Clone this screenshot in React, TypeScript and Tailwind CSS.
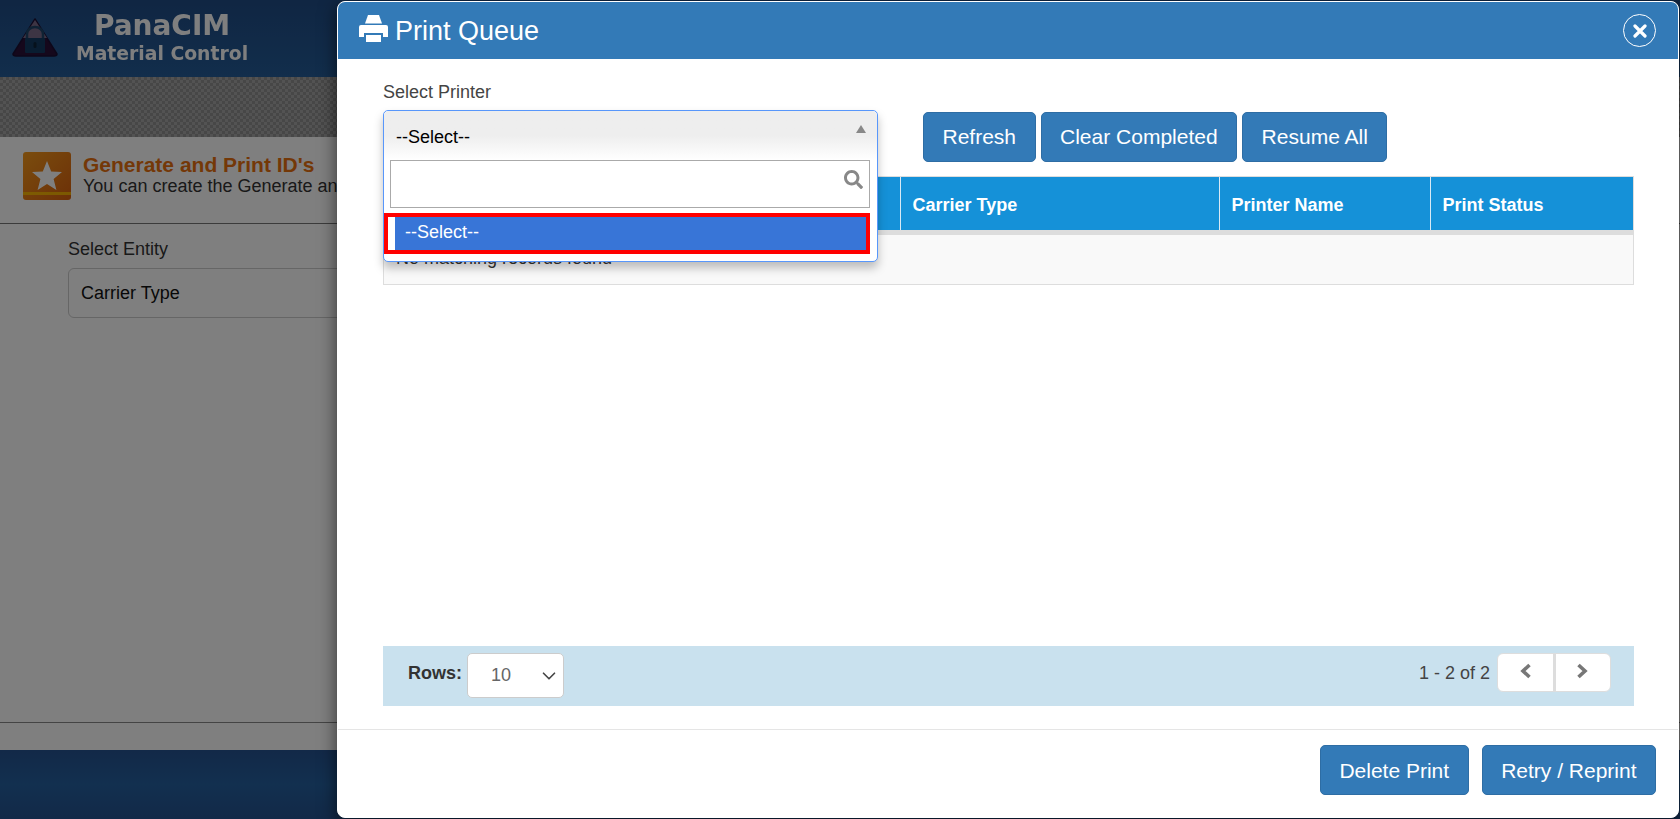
import { FaSearch } from 'react-icons/fa';
import { ChevronDown } from 'lucide-react';

const tableColumns = [
  { label: 'Carrier Type', width: 'w-[319px]' },
  { label: 'Printer Name', width: 'w-[211px]' },
  { label: 'Print Status', width: 'flex-1' },
];

const toolbarButtons = ['Refresh', 'Clear Completed', 'Resume All'];
const footerButtons = ['Delete Print', 'Retry / Reprint'];

const BlueButton = ({ label, className }: { label: string; className: string }) => (
  <button className={`bg-[#337ab7] border border-[#2e6da4] rounded-[5px] text-white text-[21px] ${className}`}>
    {label}
  </button>
);

const Logo = () => (
  <svg width="46" height="40" viewBox="0 0 46 40" className="shrink-0">
    <path d="M23 2 L45 37 Q45 39 42 39 L4 39 Q1 39 1 37 Z" fill="#2b1038" stroke="#1b0f33" strokeWidth="1.5" strokeLinejoin="round" />
    <path d="M23 3 L35 21 L11 21 Z" fill="#7a6a88" />
    <path d="M15 22 V17 a8 7 0 0 1 16 0 V22" fill="none" stroke="#1e4468" strokeWidth="2.5" />
    <rect x="13" y="21" width="20" height="15" rx="1" fill="#123a62" />
    <rect x="21.5" y="25" width="3" height="6" rx="1.5" fill="#0c2238" />
  </svg>
);

const StarBadge = () => (
  <div className="relative w-[48px] h-[48px] shrink-0 rounded-[3px] overflow-hidden bg-gradient-to-br from-[#f59a1c] to-[#d9600f]">
    <div className="absolute left-0 right-0 bottom-[5px] h-[3px] bg-[#ffc400]/80" />
    <svg width="48" height="48" viewBox="0 0 48 48" className="relative">
      <path d="M24 9 L28.2 19.4 L39 20 L30.6 27 L33.4 38 L24 32 L14.6 38 L17.4 27 L9 20 L19.8 19.4 Z" fill="#ffffff" />
    </svg>
  </div>
);

const PrintIcon = () => (
  <svg width="29" height="27" viewBox="0 0 29 27" fill="#fff" className="-mt-[4px] shrink-0">
    <path d="M9 0 H20 L23 8.5 H6 Z" />
    <path d="M2 10 H27 Q29 10 29 12 V22 H24 V18 H5 V22 H0 V12 Q0 10 2 10 Z" />
    <rect x="7" y="20" width="15" height="7" />
  </svg>
);

const Chevron = ({ d }: { d: string }) => (
  <svg width="13" height="16" viewBox="0 0 13 16" className="-mt-[3px]">
    <path d={d} fill="none" stroke="#777" strokeWidth="3.6" />
  </svg>
);

const App = () => {
  return (
    <div className="relative h-screen overflow-hidden font-['Liberation_Sans',Arial,sans-serif] text-[18px] text-[#333]">
      {/* page behind the modal */}
      <div className="flex flex-col h-full bg-white">
        <header className="h-[77px] flex items-start pl-[12px] pt-[17px] gap-[18px] bg-gradient-to-b from-[#204c86] to-[#245c98]">
          <Logo />
          <div className="flex flex-col items-center -mt-[7px] font-['DejaVu_Sans',sans-serif] font-bold text-white blur-[0.6px]">
            <span className="text-[28px] leading-[32px]">PanaCIM</span>
            <span className="text-[18.8px] leading-[24px]">Material Control</span>
          </div>
        </header>
        <div className="h-[60px] bg-[#9a9a9a] bg-[repeating-conic-gradient(#a6a6a6_0%_25%,#8e8e8e_0%_50%)] bg-[length:6px_6px]" />
        <main className="flex-1 flex flex-col">
          <div className="h-[87px] flex items-start pl-[23px] pt-[15px] gap-[12px] border-b border-[#777]">
            <StarBadge />
            <div className="pt-[1px]">
              <h2 className="font-bold text-[21px] leading-[23px] text-[#e8700f] whitespace-nowrap">Generate and Print ID's</h2>
              <p className="leading-[21px] text-[#333] whitespace-nowrap">You can create the Generate and Print ID's</p>
            </div>
          </div>
          <div className="flex-1 pl-[68px] pt-[15px] border-b border-[#888]">
            <label className="block leading-[21px] mb-[8px]">Select Entity</label>
            <div className="w-[600px] h-[50px] flex items-center pl-[12px] border border-[#ccc] rounded-[6px] text-[#111]">Carrier Type</div>
          </div>
          <div className="h-[27px]" />
        </main>
        <footer className="h-[69px] bg-gradient-to-b from-[#245290] via-[#24609f] to-[#245290]" />
      </div>
      <div className="absolute inset-0 bg-black/50" />

      {/* print queue modal */}
      <div className="absolute left-[337px] right-px top-px bottom-px flex flex-col bg-white border border-white rounded-[8px] shadow-[0_5px_18px_rgba(0,0,0,0.6)] overflow-hidden">
        <div className="h-[57px] shrink-0 flex items-center justify-between pl-[21px] pr-[22px] bg-[#337ab7] text-white">
          <div className="flex items-center gap-[7px]">
            <PrintIcon />
            <h1 className="text-[27px] leading-[30px]">Print Queue</h1>
          </div>
          <button className="w-[33px] h-[33px] flex items-center justify-center border border-white rounded-full">
            <svg width="14" height="14" viewBox="0 0 14 14">
              <path d="M2 2 L12 12 M12 2 L2 12" stroke="#fff" strokeWidth="3.2" strokeLinecap="round" />
            </svg>
          </button>
        </div>

        <div className="flex-1 flex flex-col px-[45px] pt-[23px]">
          <label className="block leading-[20px] h-[28px] text-[#444]">Select Printer</label>
          <div className="flex items-start h-[52px]">
            <div className="relative w-[494px] h-[52px] shrink-0">
              <div className="absolute z-10 left-0 top-0 w-[495px] h-[152px] bg-white border border-[#5897fb] rounded-[5px] shadow-[0_6px_10px_rgba(0,0,0,0.25)]">
                <div className="h-[49px] flex items-center justify-between pl-[12px] pr-[11px] rounded-t-[5px] bg-gradient-to-b from-[#eeeeee] via-[#eeeeee] to-white text-black">
                  <span className="mt-[4px]">--Select--</span>
                  <span className="w-0 h-0 -mt-[13px] border-x-[5px] border-x-transparent border-b-[8px] border-b-[#888]" />
                </div>
                <div className="relative ml-[6px] mr-[7px] h-[48px] border border-[#aaa] bg-white">
                  <FaSearch className="absolute right-[6px] top-[9px] w-[19px] h-[19px] text-[#888]" />
                </div>
                <div className="mt-[5px] mr-[7px] h-[41px] border-4 border-[#ff0000] flex bg-[#3875d7]">
                  <span className="w-[7px] bg-white" />
                  <span className="pl-[10px] text-white leading-[31px]">--Select--</span>
                </div>
              </div>
            </div>
            <div className="flex gap-[5px] ml-[46px] mt-[2px]">
              {toolbarButtons.map((label) => (
                <BlueButton key={label} label={label} className="h-[50px] px-[18.5px]" />
              ))}
            </div>
          </div>

          <div className="mt-[14px] mr-[-1px] border border-[#ddd] flex flex-col">
            <div className="flex h-[53px] bg-[#1591d8] border-b-[5px] border-b-[#dddddd] box-content text-white font-bold">
              <div className="w-[516px]" />
              {tableColumns.map((col) => (
                <div key={col.label} className={`${col.width} flex items-center pl-[11.5px] pt-[3px] border-l border-[#d8e9f5]`}>
                  {col.label}
                </div>
              ))}
            </div>
            <div className="h-[49px] pl-[12px] pt-[13px] bg-[#f9f9f9] leading-[21px]">No matching records found</div>
          </div>

          <div className="flex-1" />

          <div className="h-[60px] mb-[23px] mr-[-1px] flex items-start justify-between bg-[#c9e1ee] pl-[25px] pr-[23px] pt-[7px]">
            <div className="flex items-start">
              <span className="font-bold leading-[40px] mr-[5px]">Rows:</span>
              <div className="w-[97px] h-[45px] flex items-center justify-between pl-[23px] pr-[3px] bg-white border border-[#ccc] rounded-[5px] text-[#666]">
                <span>10</span>
                <ChevronDown className="w-[22px] h-[22px] text-[#444]" strokeWidth={1.8} />
              </div>
            </div>
            <div className="flex items-start">
              <span className="leading-[41px] mr-[7px] text-[#444]">1 - 2 of 2</span>
              <div className="flex w-[114px] h-[39px] bg-white border border-[#ddd] rounded-[6px]">
                <div className="flex-1 flex items-center justify-center border-r-[3px] border-[#ddd]">
                  <Chevron d="M10.5 2 L4 8 L10.5 14" />
                </div>
                <div className="flex-1 flex items-center justify-center">
                  <Chevron d="M2.5 2 L9 8 L2.5 14" />
                </div>
              </div>
            </div>
          </div>
        </div>

        <div className="h-[88px] shrink-0 flex justify-end gap-[13px] pt-[15px] pr-[22px] border-t border-[#e5e5e5]">
          {footerButtons.map((label) => (
            <BlueButton key={label} label={label} className="h-[50px] px-[18.5px] pt-[2px]" />
          ))}
        </div>
      </div>
    </div>
  );
};

export default App;
